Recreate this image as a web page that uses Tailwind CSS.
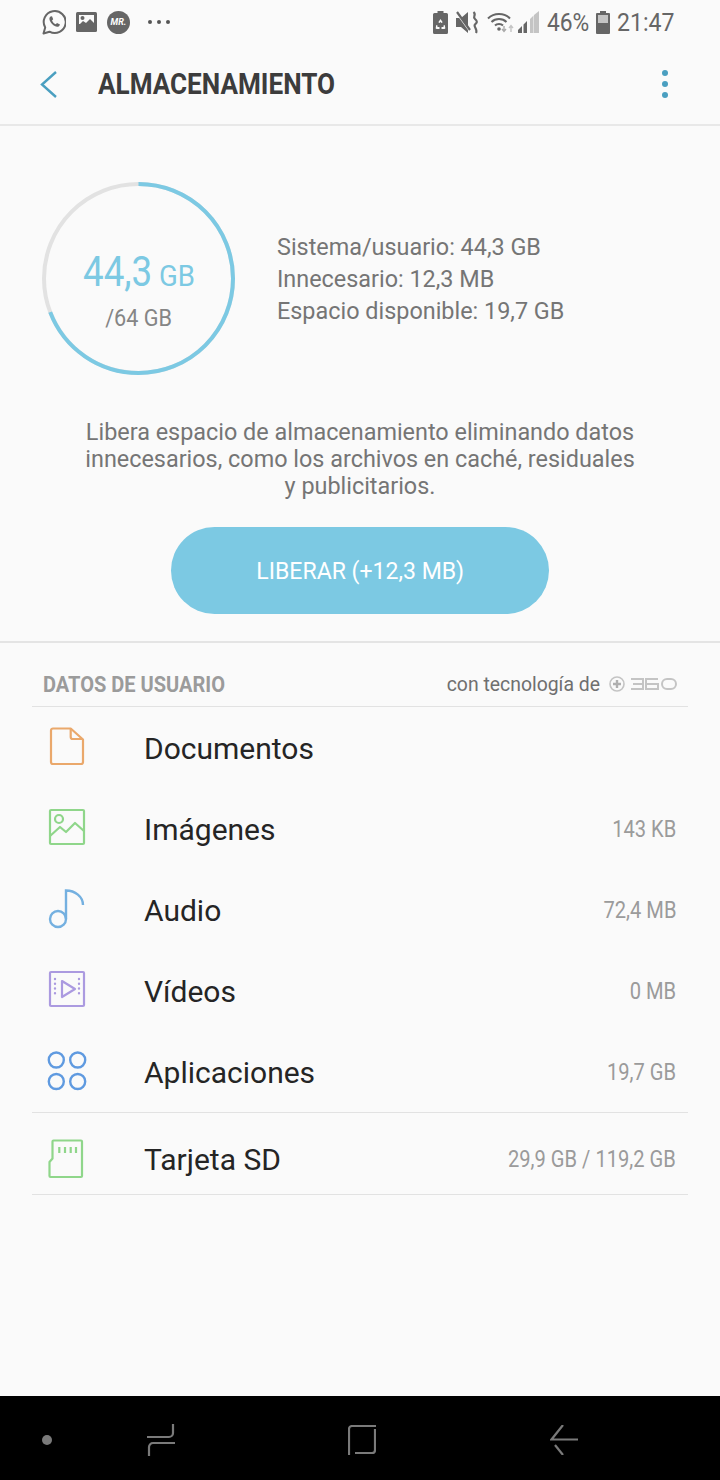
<!DOCTYPE html>
<html lang="es">
<head>
    <meta charset="UTF-8">
    <meta name="viewport" content="width=device-width, initial-scale=1.0">
    <title>Almacenamiento</title>
    <script src="https://cdn.jsdelivr.net/npm/@tailwindcss/browser@4"></script>
</head>
<body class="bg-[#fafafa] font-['Roboto',sans-serif] w-[720px] h-[1480px] overflow-hidden flex flex-col">

    <!-- Status bar -->
    <div class="h-[44px] flex items-center pl-[42px] pr-[45px] text-[#666666] shrink-0">
        <svg class="w-[24px] h-[26px]" viewBox="0 0 24 26" fill="none">
            <path d="M1.5 24.5l1.7-6A11 11 0 1 1 7.5 22.7z" stroke="#666666" stroke-width="2" stroke-linejoin="round"/>
            <path d="M8.5 7.5c-1.5 1-1.5 3 0 5.5s4 4.500 6.500 4.800c1.500.2 2.800-1 3-2.300l-3-1.500-1.200 1.300c-1.500-.5-3-2-3.800-3.800l1.200-1.200-1.200-3z" fill="#666666"/>
        </svg>
        <svg class="w-[21px] h-[20px] ml-[10px]" viewBox="0 0 21 20">
            <rect width="21" height="20" rx="1.500" fill="#666666"/>
            <rect x="3" y="3" width="15" height="9" fill="#fafafa"/>
            <circle cx="6.500" cy="6" r="2" fill="#666666"/>
            <path d="M3 13l4-4 3 2 4-4 4 4v4H3z" fill="#666666"/>
        </svg>
        <div class="w-[23px] h-[23px] ml-[10px] rounded-full bg-[#666666] flex items-center justify-center text-white text-[9px] font-bold italic leading-none">MR.</div>
        <div class="flex gap-[5px] ml-[18px]">
            <div class="w-[4px] h-[4px] rounded-full bg-[#555555]"></div>
            <div class="w-[4px] h-[4px] rounded-full bg-[#555555]"></div>
            <div class="w-[4px] h-[4px] rounded-full bg-[#555555]"></div>
        </div>
        <svg class="w-[15px] h-[23px] ml-auto" viewBox="0 0 15 23">
            <path d="M4.500 0h6v2h3a1.500 1.500 0 0 1 1.500 1.500V21.500A1.500 1.500 0 0 1 13.500 23h-12A1.500 1.500 0 0 1 0 21.500V3.500A1.500 1.500 0 0 1 1.500 2h3z" fill="#666666"/>
            <path d="M7.500 8l2.200 3.200-1.500.8-.7-1.200-.7 1.200-1.500-.8zM3.200 14l1.500.8-.4 1.200h2.200v2H3.700a1 1 0 0 1-.9-1.500zM11.800 14l-1.500.8.400 1.200H8.500v2h2.800a1 1 0 0 0 .9-1.500z" fill="#fafafa"/>
        </svg>
        <svg class="w-[23px] h-[23px] ml-[8px]" viewBox="0 0 23 23" fill="none">
            <path d="M0 7h5l7-6v21l-7-6H0z" fill="#666666"/>
            <path d="M1.500 3l13 18" stroke="#fafafa" stroke-width="2"/>
            <path d="M1 1l13 18" stroke="#666666" stroke-width="2.200"/>
            <path d="M17.500 1c3.500 3-1.500 4.500 1.500 7s2 3.500 0 5.500 3 4.500 1 8.500" stroke="#666666" stroke-width="2.200"/>
        </svg>
        <svg class="w-[28px] h-[22px] ml-[8px]" viewBox="0 0 28 22" fill="none">
            <path d="M1 7.500c6-6 16-6 22 0M4.500 11c4-4 11-4 15 0M8 14.500c2-2 6-2 8 0" stroke="#666666" stroke-width="2"/>
            <circle cx="12" cy="18" r="1.800" fill="#666666"/>
            <path d="M17 15v5m-2-2l2 2.500 2-2.500" stroke="#aaaaaa" stroke-width="1.400"/>
            <path d="M24 21v-6m-2 2l2-2.500 2 2.500" stroke="#c4c4c4" stroke-width="1.400"/>
        </svg>
        <svg class="w-[21px] h-[22px] ml-[3px]" viewBox="0 0 21 22">
            <path d="M0 22v-3l4-4v7zM5.500 22V13.500L9 10v12z" fill="#666666"/>
            <path d="M12 22V8l3.500-3.500V22zM16 22V4l5-4v22z" fill="#c4c4c4"/>
        </svg>
        <span class="block w-[43px] ml-[8px] text-[26.5px] leading-none whitespace-nowrap origin-left scale-x-[.86]">46%</span>
        <svg class="w-[14px] h-[23px] ml-[6px]" viewBox="0 0 14 23">
            <path d="M4 0h6v2h3a1 1 0 0 1 1 1v19a1 1 0 0 1-1 1H1a1 1 0 0 1-1-1V3a1 1 0 0 1 1-1h3z" fill="#666666"/>
            <rect x="2" y="4" width="10" height="8" fill="#c4c4c4"/>
        </svg>
        <span class="block w-[58px] ml-[7px] text-[26.5px] leading-none whitespace-nowrap origin-left scale-x-[.87]">21:47</span>
    </div>

    <!-- Header -->
    <div class="h-[82px] flex items-center pl-[40px] pr-[52px] border-b-2 border-[#e8e8e8] shrink-0">
        <svg class="w-[17px] h-[27px]" viewBox="0 0 17 27" fill="none">
            <path d="M16 1L2 13.500 16 26" stroke="#4a9fc0" stroke-width="2.400"/>
        </svg>
        <h1 class="block w-[237px] ml-[41px] text-[30px] font-bold text-[#3c3c3c] leading-none whitespace-nowrap origin-left scale-x-[.87]">ALMACENAMIENTO</h1>
        <div class="ml-auto flex flex-col gap-[5px]">
            <div class="w-[6px] h-[6px] rounded-full bg-[#4a9fc0]"></div>
            <div class="w-[6px] h-[6px] rounded-full bg-[#4a9fc0]"></div>
            <div class="w-[6px] h-[6px] rounded-full bg-[#4a9fc0]"></div>
        </div>
    </div>

    <!-- Summary -->
    <div class="h-[517px] border-b-2 border-[#e4e4e4] shrink-0 flex flex-col">
        <div class="flex items-center pl-[42px] pt-[56px]">
            <div class="relative w-[193px] h-[193px] shrink-0">
                <svg class="w-full h-full -rotate-90" viewBox="0 0 193 193" fill="none">
                    <circle cx="96.500" cy="96.500" r="94.500" stroke="#e2e2e2" stroke-width="4"/>
                    <circle cx="96.500" cy="96.500" r="94.500" stroke="#7cc9e3" stroke-width="4" pathLength="100" stroke-dasharray="69.200 100"/>
                </svg>
                <div class="absolute inset-0 flex flex-col items-center justify-center pt-[23px]">
                    <div class="flex items-baseline text-[#7cc9e3] leading-none">
                        <span class="block w-[69px] text-[42px] whitespace-nowrap origin-left scale-x-[.875]">44,3</span>
                        <span class="block w-[35px] ml-[7px] text-[29px] whitespace-nowrap origin-left scale-x-[.95]">GB</span>
                    </div>
                    <div class="text-[23px] text-[#858585] mt-[14px] leading-none scale-x-[.94]">/64 GB</div>
                </div>
            </div>
            <div class="ml-[42px] text-[23.4px] leading-[32px] text-[#757575]">
                <p>Sistema/usuario: 44,3 GB</p>
                <p>Innecesario: 12,3 MB</p>
                <p>Espacio disponible: 19,7 GB</p>
            </div>
        </div>
        <p class="mt-[44px] text-center text-[23.4px] leading-[27px] text-[#757575]">Libera espacio de almacenamiento eliminando datos<br>innecesarios, como los archivos en caché, residuales<br>y publicitarios.</p>
        <button class="mt-[27px] mx-auto w-[378px] h-[87px] rounded-full bg-[#7cc9e3] text-white text-[24px]"><span class="inline-block scale-x-[.96]">LIBERAR (+12,3 MB)</span></button>
    </div>

    <!-- List -->
    <div class="mx-[32px] flex-1">
        <div class="h-[64px] flex items-center justify-between pl-[11px] pr-[11px] pt-[20px] border-b border-[#e2e2e2]">
            <span class="block text-[22px] font-bold text-[#9b9b9b] whitespace-nowrap origin-left scale-x-[.91]">DATOS DE USUARIO</span>
            <div class="flex items-center">
                <span class="text-[19.400px] text-[#6f6f6f]">con tecnología de</span>
                <svg class="w-[68px] h-[16px] ml-[9px]" viewBox="0 0 68 16" fill="none">
                    <circle cx="8" cy="8" r="7" stroke="#c4c4c4" stroke-width="1.600"/>
                    <path d="M4 8h8M8 4v8" stroke="#b0b0b0" stroke-width="2.400"/>
                    <path d="M22 3h12v10H22M24 8h10M49 3H37v10h12V8H37" stroke="#c4c4c4" stroke-width="2"/>
                    <rect x="53" y="3" width="14" height="10" rx="5" stroke="#c4c4c4" stroke-width="2"/>
                </svg>
            </div>
        </div>

        <div class="h-[81px] flex items-center pl-[15px] pr-[12px]">
            <svg class="w-[40px] h-[40px] mb-[2px] shrink-0" viewBox="0 0 40 40" fill="none" stroke="#eaa86b" stroke-width="2.200" stroke-linejoin="round">
                <path d="M23.700 1.500H6a2 2 0 0 0-2 2V35a2 2 0 0 0 2 2h28a2 2 0 0 0 2-2V12.500z"/>
                <path d="M23.700 1.500V10a2 2 0 0 0 2 2H36"/>
            </svg>
            <span class="ml-[57px] mt-[2px] text-[30px] text-[#252525]">Documentos</span>
        </div>
        <div class="h-[81px] flex items-center pl-[15px] pr-[12px]">
            <svg class="w-[40px] h-[40px] mb-[2px] shrink-0" viewBox="0 0 40 40" fill="none" stroke="#8fd68a" stroke-width="2.200" stroke-linejoin="round">
                <rect x="3" y="2" width="34" height="34" rx="1"/>
                <circle cx="12" cy="11" r="4"/>
                <path d="M3 28l10-9 6 5 9-9 9 8"/>
            </svg>
            <span class="ml-[57px] mt-[2px] text-[30px] text-[#252525]">Imágenes</span>
            <span class="inline-block ml-auto mt-[4px] text-[23px] text-[#9b9b9b] origin-right scale-x-[.875]">143 KB</span>
        </div>
        <div class="h-[81px] flex items-center pl-[15px] pr-[12px]">
            <svg class="w-[40px] h-[40px] mb-[2px] shrink-0" viewBox="0 0 40 40" fill="none" stroke="#74b0e0" stroke-width="2.400">
                <circle cx="11" cy="30" r="8"/>
                <path d="M19 30V1.500c9 0 17 6 17 14.500"/>
            </svg>
            <span class="ml-[57px] mt-[2px] text-[30px] text-[#252525]">Audio</span>
            <span class="inline-block ml-auto mt-[4px] text-[23px] text-[#9b9b9b] origin-right scale-x-[.875]">72,4 MB</span>
        </div>
        <div class="h-[81px] flex items-center pl-[15px] pr-[12px]">
            <svg class="w-[40px] h-[40px] mb-[2px] shrink-0" viewBox="0 0 40 40" fill="none" stroke="#ab9ae0" stroke-width="2.200" stroke-linejoin="round">
                <rect x="3" y="2" width="34" height="34" rx="1"/>
                <path d="M15 11l13 8-13 8z"/>
                <path d="M8 9v19M32 9v19" stroke-width="2.400" stroke-linecap="round" stroke-dasharray="0.100 4.650"/>
            </svg>
            <span class="ml-[57px] mt-[2px] text-[30px] text-[#252525]">Vídeos</span>
            <span class="inline-block ml-auto mt-[4px] text-[23px] text-[#9b9b9b] origin-right scale-x-[.875]">0 MB</span>
        </div>
        <div class="h-[81px] flex items-center pl-[15px] pr-[12px] border-b border-[#e2e2e2] box-content">
            <svg class="w-[40px] h-[40px] mb-[2px] shrink-0" viewBox="0 0 40 40" fill="none" stroke="#5f9ae0" stroke-width="2.400">
                <circle cx="9.300" cy="9" r="7.500"/>
                <circle cx="30.700" cy="9" r="7.500"/>
                <circle cx="9.300" cy="30.500" r="7.500"/>
                <circle cx="30.700" cy="30.500" r="7.500"/>
            </svg>
            <span class="ml-[57px] mt-[2px] text-[30px] text-[#252525]">Aplicaciones</span>
            <span class="inline-block ml-auto mt-[4px] text-[23px] text-[#9b9b9b] origin-right scale-x-[.875]">19,7 GB</span>
        </div>
        <div class="h-[82px] flex items-center pl-[15px] pr-[12px] pt-[12px] border-b border-[#e2e2e2]">
            <svg class="w-[40px] h-[40px] mb-[2px] shrink-0" viewBox="0 0 40 40" fill="none" stroke="#8fd68a" stroke-width="2.200" stroke-linejoin="round">
                <path d="M7 1.500h27a1 1 0 0 1 1 1V37a1 1 0 0 1-1 1H3.500a1 1 0 0 1-1-1V23l3-3.500v-17a1 1 0 0 1 1-1z"/>
                <path d="M12.300 8v6M18 8v6M23.700 8v6M29 8v6"/>
            </svg>
            <span class="ml-[57px] text-[30px] text-[#252525]">Tarjeta SD</span>
            <span class="inline-block ml-auto mt-[2px] text-[23px] text-[#9b9b9b] origin-right scale-x-[.875]">29,9 GB / 119,2 GB</span>
        </div>
    </div>

    <!-- Navigation bar -->
    <div class="h-[84px] bg-black flex items-center pl-[42px] pt-[4px] shrink-0">
        <div class="w-[10px] h-[10px] rounded-full bg-[#7a7a7a]"></div>
        <svg class="w-[28px] h-[32px] ml-[95px]" viewBox="0 0 28 32" fill="none" stroke="#7a7a7a" stroke-width="2.200">
            <path d="M0 13h22a4 4 0 0 0 4-4V0"/>
            <path d="M28 19H6a4 4 0 0 0-4 4v9"/>
        </svg>
        <svg class="w-[28px] h-[30px] ml-[173px]" viewBox="0 0 28 30" fill="none" stroke="#7a7a7a" stroke-width="2.200">
            <path d="M1 30V4a3 3 0 0 1 3-3h24"/>
            <path d="M27 4v21a3 3 0 0 1-3 3H7"/>
        </svg>
        <svg class="w-[28px] h-[30px] ml-[174px]" viewBox="0 0 28 30" fill="none" stroke="#7a7a7a" stroke-width="2.200">
            <path d="M13 0L1.500 14.500h26.500"/>
            <path d="M5 20l8 10"/>
        </svg>
    </div>

</body>
</html>
